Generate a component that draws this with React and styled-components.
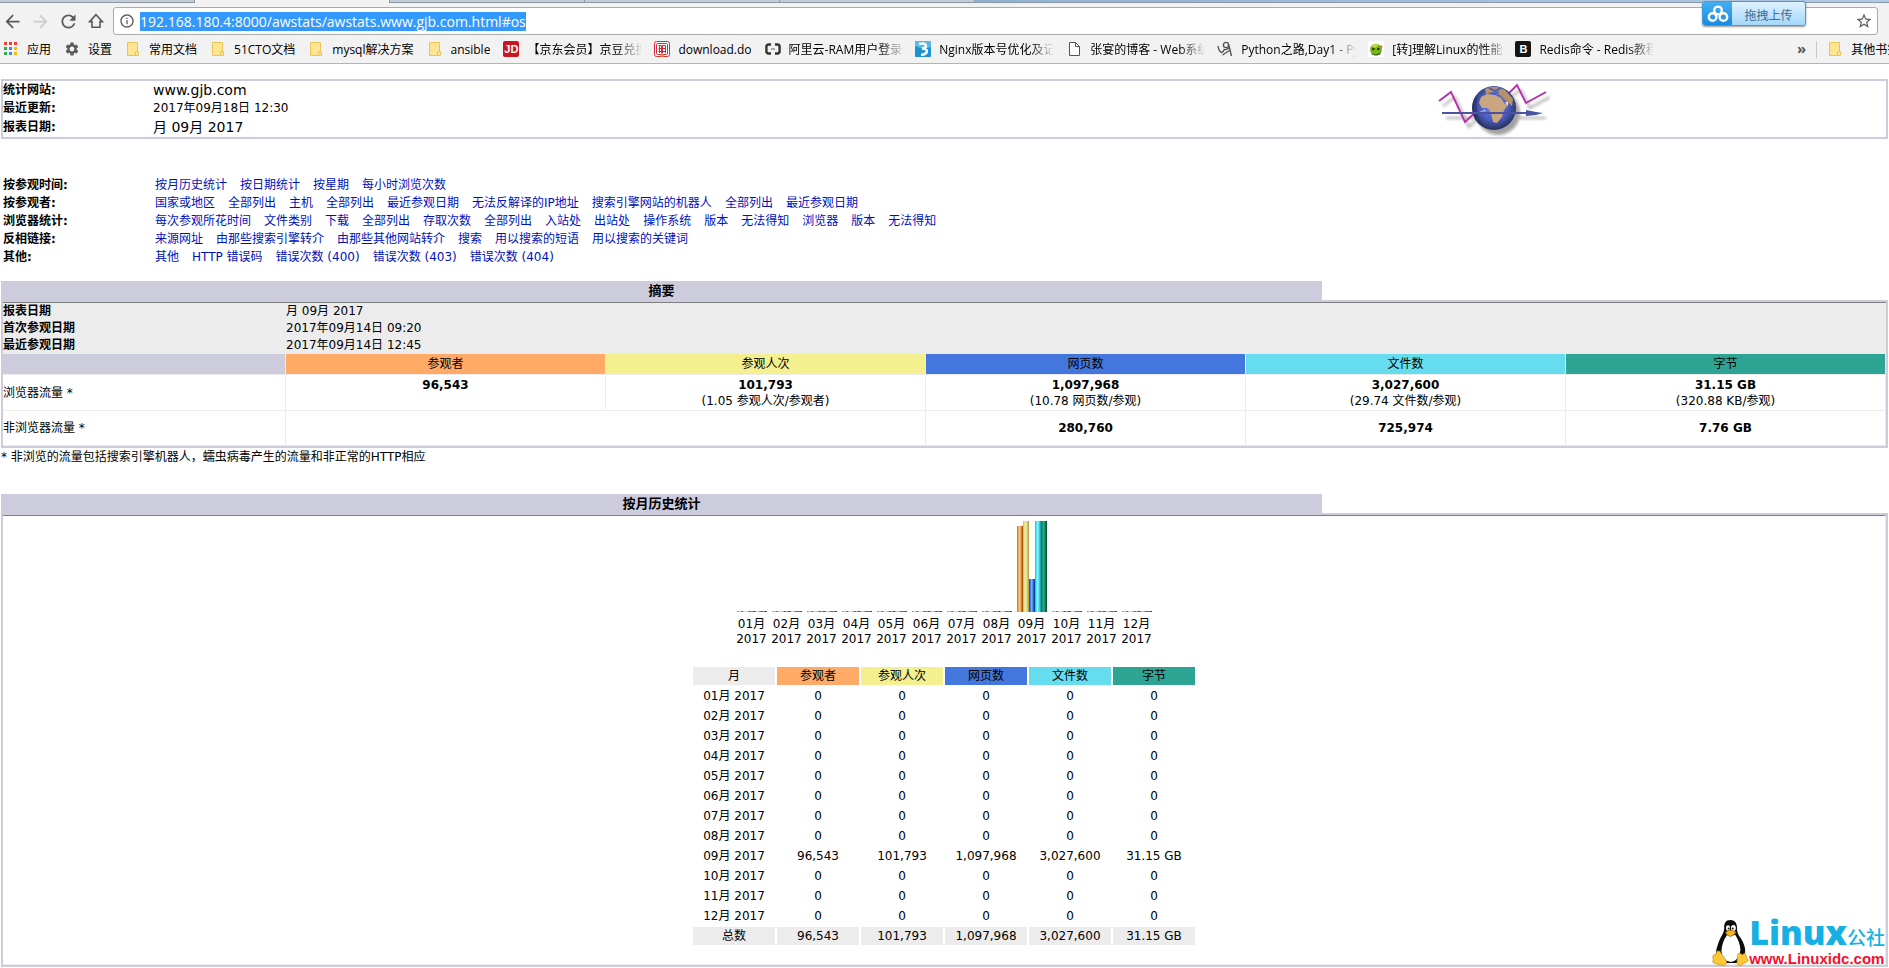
import React, { useEffect, useRef } from 'react';
import styled, { createGlobalStyle } from 'styled-components';
import {
  MdArrowBack,
  MdArrowForward,
  MdRefresh,
  MdInfoOutline,
  MdSettings,
  MdStarBorder,
} from 'react-icons/md';

const colors = {
  visitors: '#ffaa66',
  visits: '#f4f090',
  pages: '#4477dd',
  hits: '#66ddee',
  bytes: '#2ea495',
};

const barStripes = {
  visitors: ['#d08030', '#f0a860', '#f8c484', '#e8b068', '#c08030', '#a45c08'],
  visits: ['#d0c468', '#e8e090', '#f0eaa0', '#e4dc90', '#d0c468', '#b8aa48'],
  pages: ['#1c54c4', '#4480e8', '#84a8f8', '#5c8ce8', '#2c60cc', '#0c3c9c'],
  hits: ['#30c8d8', '#58e4f0', '#88f4fc', '#60e4f0', '#38ccd8', '#18a4b0'],
  bytes: ['#0c7c5c', '#24946c', '#30a490', '#1c9478', '#087858', '#00583c'],
};

const headings = [
  { key: 'visitors', label: '参观者' },
  { key: 'visits', label: '参观人次' },
  { key: 'pages', label: '网页数' },
  { key: 'hits', label: '文件数' },
  { key: 'bytes', label: '字节' },
];

const menu = [
  { title: '按参观时间:', links: ['按月历史统计', '按日期统计', '按星期', '每小时浏览次数'] },
  {
    title: '按参观者:',
    links: [
      '国家或地区',
      '全部列出',
      '主机',
      '全部列出',
      '最近参观日期',
      '无法反解译的IP地址',
      '搜索引擎网站的机器人',
      '全部列出',
      '最近参观日期',
    ],
  },
  {
    title: '浏览器统计:',
    links: [
      '每次参观所花时间',
      '文件类别',
      '下载',
      '全部列出',
      '存取次数',
      '全部列出',
      '入站处',
      '出站处',
      '操作系统',
      '版本',
      '无法得知',
      '浏览器',
      '版本',
      '无法得知',
    ],
  },
  {
    title: '反相链接:',
    links: ['来源网址', '由那些搜索引擎转介', '由那些其他网站转介', '搜索', '用以搜索的短语', '用以搜索的关键词'],
  },
  { title: '其他:', links: ['其他', 'HTTP 错误码', '错误次数 (400)', '错误次数 (403)', '错误次数 (404)'] },
];

const empty = ['0', '0', '0', '0', '0'];
const total = ['96,543', '101,793', '1,097,968', '3,027,600', '31.15 GB'];
const months = Array.from({ length: 12 }, (_, i) => {
  const active = i === 8;
  return {
    name: `${String(i + 1).padStart(2, '0')}月`,
    values: active ? total : empty,
    bars: active ? [86, 91, 33, 91, 91] : [1, 1, 1, 1, 1],
  };
});

function HomeIcon() {
  return (
    <svg width='16' height='16' viewBox='0 0 16 16' fill='none' stroke='#5a5a5a' strokeWidth='1.6'>
      <path d='M8 1.6 1.6 8.6H4V14.2H12V8.6H14.4Z' />
    </svg>
  );
}

function AppsIcon() {
  const dots = ['#ea4335', '#ea4335', '#ea4335', '#34a853', '#4285f4', '#fbbc05', '#34a853', '#4285f4', '#fbbc05'];
  return (
    <svg width='16' height='16' viewBox='0 0 16 16'>
      {dots.map((fill, i) => (
        <rect key={i} x={1 + (i % 3) * 5} y={1 + Math.floor(i / 3) * 5} width='3' height='3' fill={fill} />
      ))}
    </svg>
  );
}

function FolderIcon() {
  return (
    <svg width='16' height='16' viewBox='0 0 16 16'>
      <path d='M2.5 1.5H12.5V10.5H13.5V14.5H2.5Z' fill='#ffe592' stroke='#e8c558' />
      <path d='M12.5 10.5H10.5V14.5' fill='none' stroke='#e8c558' />
    </svg>
  );
}

function PageIcon() {
  return (
    <svg width='16' height='16' viewBox='0 0 16 16' fill='#fff' stroke='#555'>
      <path d='M3.5 1.5H9.5L13.5 5.5V14.5H3.5Z' />
      <path d='M9.5 1.5V5.5H13.5' fill='none' />
    </svg>
  );
}

function SealIcon() {
  return (
    <svg width='16' height='16' viewBox='0 0 16 16' fill='none' stroke='#d32a3c'>
      <rect x='0.5' y='0.5' width='15' height='15' rx='2' fill='#fff' />
      <rect x='2.5' y='2.5' width='11' height='11' rx='1' />
      <path d='M4.5 4.5H7.5V12.5M8.5 12.5V4.5H11.5V12M4.5 7.5H11.5M4.5 10.5H11.5M5.5 4.5V12' />
      <path d='M6 14.5H10' stroke='#f0a020' strokeWidth='2' />
    </svg>
  );
}

function AliIcon() {
  return (
    <svg width='16' height='16' viewBox='0 0 16 16' fill='none' stroke='#333' strokeWidth='2.4'>
      <path d='M6 3.5H3.6Q1.4 3.5 1.4 5.7V10.3Q1.4 12.5 3.6 12.5H6M10 3.5H12.4Q14.6 3.5 14.6 5.7V10.3Q14.6 12.5 12.4 12.5H10' />
      <path d='M6 8H10' stroke='#888' strokeWidth='1.4' />
    </svg>
  );
}

function BlueIcon() {
  return (
    <svg width='16' height='16' viewBox='0 0 16 16'>
      <rect width='16' height='16' rx='1' fill='#1c93d1' />
      <path d='M0 0H16V6Q8 9 0 5Z' fill='#57b9e4' />
      <path d='M4 3Q11 1.5 11 5Q11 7 7 7.5Q12.5 8 12 10.5Q11 13.5 6 14' fill='none' stroke='#fff' strokeWidth='2.4' />
    </svg>
  );
}

function ScribbleIcon() {
  return (
    <svg width='16' height='16' viewBox='0 0 16 16' fill='none' stroke='#555' strokeWidth='1.4'>
      <path d='M1 5Q1.5 10 4.5 11.5Q6.5 11 7.5 8' />
      <circle cx='9' cy='4' r='2.6' />
      <path d='M11.6 3.5Q13 8 14.4 15M7 8.5Q10 9 12 7M5.5 14 12.5 9.5' />
    </svg>
  );
}

function FrogIcon() {
  return (
    <svg width='16' height='16' viewBox='0 0 16 16'>
      <rect width='16' height='16' fill='#fff' />
      <ellipse cx='8' cy='8.5' rx='6' ry='5.8' fill='#79b51c' />
      <path d='M3 5Q7 1 11 4L7 7Z' fill='#b6dc46' />
      <path d='M3 12Q8 15 13 11L12 13.5Q8 15.5 4 13.6Z' fill='#38600c' />
      <circle cx='5.4' cy='8' r='1.3' fill='#253a06' />
      <circle cx='10.4' cy='8' r='1.3' fill='#253a06' />
      <circle cx='13.4' cy='5.6' r='1' fill='#cc5a20' />
    </svg>
  );
}

function GlobeLogo() {
  return (
    <svg width='112' height='56' viewBox='0 -1 112 56' role='img' aria-label='AWStats'>
      <defs>
        <radialGradient id='sea' cx='0.5' cy='0.45' r='0.55'>
          <stop offset='0' stopColor='#7a8ae8' />
          <stop offset='0.6' stopColor='#4a5cc0' />
          <stop offset='1' stopColor='#26305c' />
        </radialGradient>
        <filter id='soft' x='-20%' y='-20%' width='140%' height='140%'>
          <feGaussianBlur stdDeviation='1.4' />
        </filter>
        <clipPath id='disc'>
          <circle cx='56' cy='26' r='22' />
        </clipPath>
      </defs>
      <g filter='url(#soft)' opacity='0.55' transform='translate(4 5)'>
        <circle cx='56' cy='26' r='22' fill='#555' />
        <path d='M1 19 13 10 27 40 39 29M70 9 79 3 88 21 108 10M4 31H104' fill='none' stroke='#666' strokeWidth='2' />
      </g>
      <path d='M1 19 13 10 27 40 40 28M66 16 79 3 88 21 108 10' fill='none' stroke='#b82cac' strokeWidth='1.8' />
      <circle cx='56' cy='26' r='22' fill='url(#sea)' />
      <g clipPath='url(#disc)'>
        <path
          d='M43 15 49 12 57 13 63 16 66 21 70 23 66 28 64 35 59 41 55 40 53 31 50 26 44 26 41 21Z'
          fill='#c9a680'
        />
        <path d='M47 7Q57 2 67 8L75 17 74 24 67 18 62 13 55 10 48 12Z' fill='#b6926a' />
        <path d='M51 6 57 9 63 6M55 12 61 10' fill='none' stroke='#4658b8' strokeWidth='1.6' />
        <path d='M41 30 47 27 49 32Z' fill='#aab4ee' opacity='0.7' />
        <path d='M67 20 70 20 70 24Z' fill='#e8e8f4' />
        <path d='M34 8Q40 10 39 25T52 48H34Z' fill='#1c2448' opacity='0.35' />
      </g>
      <path d='M4 31H92' stroke='#4a52a4' strokeWidth='2.2' />
      <path d='M88 28 98 30 105 31 98 33 88 34Z' fill='#4a52a4' />
    </svg>
  );
}

function CloudIcon() {
  return (
    <svg width='22' height='18' viewBox='0 0 22 18' fill='none' stroke='#fff' strokeWidth='2.4'>
      <circle cx='11' cy='5.4' r='3.8' />
      <circle cx='5.6' cy='12' r='3.8' />
      <circle cx='16.4' cy='12' r='3.8' />
    </svg>
  );
}

function Penguin() {
  return (
    <svg width='37' height='46' viewBox='0 0 37 46'>
      <path
        d='M18.5 0C13.5 0 12 3.4 12.2 8C12.4 13 8.4 16.6 6.4 23C4.8 28 3.4 31 4.4 35L9 43H28L33 34C34 28 31.6 22.6 28.6 18C25.6 14 25 12 25 7.6C25 3 22.6 0 18.5 0Z'
        fill='#0c0c0c'
      />
      <path d='M15 15Q19 18 23 14.6Q28 22 28.4 30Q28 40 19 42Q10 41 9.4 31Q10 22 15 15Z' fill='#fff' />
      <ellipse cx='16' cy='8' rx='2' ry='2.8' fill='#fff' />
      <ellipse cx='21.4' cy='8' rx='2.4' ry='3' fill='#fff' />
      <circle cx='16.6' cy='8.6' r='1' fill='#111' />
      <circle cx='20.8' cy='8.6' r='1' fill='#111' />
      <path d='M13.6 12.4Q18 8.4 24 12Q21 16.4 18 16.4Q14.8 15.6 13.6 12.4Z' fill='#f4b41c' stroke='#a87408' strokeWidth='0.5' />
      <path
        d='M5 31Q8 30 9.6 34L14.6 41Q14.6 46 9.6 45.4L1.6 43Q0 42 1.2 39.6L0.8 36Q1 34.4 4 34.2Z'
        fill='#fcc838'
        stroke='#b88410'
        strokeWidth='0.6'
      />
      <path
        d='M25.6 35Q26 32.4 28 33.4Q31 35.6 33 33Q34.6 36 34.6 38L36.4 40Q36.6 41 34 42.2L28.6 45.4Q25 46 25 42Z'
        fill='#fcc838'
        stroke='#b88410'
        strokeWidth='0.6'
      />
    </svg>
  );
}

const bookmarks = [
  { icon: <AppsIcon />, text: '应用' },
  { icon: <MdSettings size={16} color='#5a5a5a' />, text: '设置' },
  { icon: <FolderIcon />, text: '常用文档' },
  { icon: <FolderIcon />, text: '51CTO文档' },
  { icon: <FolderIcon />, text: 'mysql解决方案' },
  { icon: <FolderIcon />, text: 'ansible' },
  { badge: 'JD', color: '#c81623', text: '【京东会员】京豆兑换', fade: true },
  { icon: <SealIcon />, text: 'download.do' },
  { icon: <AliIcon />, text: '阿里云-RAM用户登录', fade: true },
  { icon: <BlueIcon />, text: 'Nginx版本号优化及记录', fade: true },
  { icon: <PageIcon />, text: '张宴的博客 - Web系统', fade: true },
  { icon: <ScribbleIcon />, text: 'Python之路,Day1 - Py', fade: true },
  { icon: <FrogIcon />, text: '[转]理解Linux的性能', fade: true },
  { badge: 'B', color: '#151515', text: 'Redis命令 - Redis教程', fade: true },
];

function Browser() {
  const url = useRef(null);

  useEffect(() => {
    url.current.focus();
    url.current.select();
  }, []);

  return (
    <header>
      <TabStrip>
        <Tab />
        <Tab $active />
        <Tab />
        <Tab />
        <Tab />
      </TabStrip>
      <Toolbar>
        <ToolButton aria-label='后退'>
          <MdArrowBack size={21} />
        </ToolButton>
        <ToolButton aria-label='前进' disabled>
          <MdArrowForward size={21} />
        </ToolButton>
        <ToolButton aria-label='刷新'>
          <MdRefresh size={21} />
        </ToolButton>
        <ToolButton aria-label='主页'>
          <HomeIcon />
        </ToolButton>
        <AddressBar>
          <MdInfoOutline size={16} color='#5a5a5a' />
          <UrlInput
            ref={url}
            type='text'
            aria-label='地址'
            spellCheck={false}
            defaultValue='192.168.180.4:8000/awstats/awstats.www.gjb.com.html#os'
          />
          <ToolButton aria-label='收藏'>
            <MdStarBorder size={18} />
          </ToolButton>
        </AddressBar>
      </Toolbar>
      <Bookmarks>
        {bookmarks.map((item) => (
          <Bookmark key={item.text} href='#os'>
            {item.badge ? <Badge $color={item.color}>{item.badge}</Badge> : item.icon}
            <BookmarkText $fade={item.fade}>{item.text}</BookmarkText>
          </Bookmark>
        ))}
        <More>
          <MoreButton aria-label='更多书签'>»</MoreButton>
          <OtherBookmarks href='#os'>
            <FolderIcon />
            <BookmarkText>其他书签</BookmarkText>
          </OtherBookmarks>
        </More>
      </Bookmarks>
      <Upload>
        <UploadIcon>
          <CloudIcon />
        </UploadIcon>
        <UploadText>拖拽上传</UploadText>
      </Upload>
    </header>
  );
}

function Summary() {
  return (
    <Section>
      <SectionTitle>摘要</SectionTitle>
      <Frame>
        <SummaryTable>
          <colgroup>
            <col className='label' />
            {headings.map((h) => (
              <col key={h.key} />
            ))}
          </colgroup>
          <tbody>
            <InfoRow>
              <th scope='row'>报表日期</th>
              <td colSpan={5}>月 09月 2017</td>
            </InfoRow>
            <InfoRow>
              <th scope='row'>首次参观日期</th>
              <td colSpan={5}>2017年09月14日 09:20</td>
            </InfoRow>
            <InfoRow>
              <th scope='row'>最近参观日期</th>
              <td colSpan={5}>2017年09月14日 12:45</td>
            </InfoRow>
            <HeadRow>
              <HeadCell $bg='#ccccdd' />
              {headings.map((h) => (
                <HeadCell key={h.key} $bg={colors[h.key]}>
                  {h.label}
                </HeadCell>
              ))}
            </HeadRow>
            <TrafficRow>
              <th scope='row'>浏览器流量 *</th>
              <td>
                <b>96,543</b>
                <br />
                &nbsp;
              </td>
              <td>
                <b>101,793</b>
                <br />
                (1.05 参观人次/参观者)
              </td>
              <td>
                <b>1,097,968</b>
                <br />
                (10.78 网页数/参观)
              </td>
              <td>
                <b>3,027,600</b>
                <br />
                (29.74 文件数/参观)
              </td>
              <td>
                <b>31.15 GB</b>
                <br />
                (320.88 KB/参观)
              </td>
            </TrafficRow>
            <TrafficRow>
              <th scope='row'>非浏览器流量 *</th>
              <td colSpan={2} />
              <td>
                <b>280,760</b>
              </td>
              <td>
                <b>725,974</b>
              </td>
              <td>
                <b>7.76 GB</b>
              </td>
            </TrafficRow>
          </tbody>
        </SummaryTable>
      </Frame>
      <Footnote>* 非浏览的流量包括搜索引擎机器人，蠕虫病毒产生的流量和非正常的HTTP相应</Footnote>
    </Section>
  );
}

function History() {
  return (
    <Section>
      <SectionTitle>按月历史统计</SectionTitle>
      <Frame>
        <HistoryBody>
          <Chart>
            {months.map((m) => (
              <Month key={m.name}>
                <Bars>
                  {m.bars.map((height, i) => (
                    <Bar key={headings[i].key} $kind={headings[i].key} style={{ height }} />
                  ))}
                </Bars>
                <MonthLabel>
                  {m.name}
                  <br />
                  2017
                </MonthLabel>
              </Month>
            ))}
          </Chart>
          <MonthTable>
            <thead>
              <tr>
                <MonthCell as='th' $bg='#ececec'>
                  月
                </MonthCell>
                {headings.map((h) => (
                  <MonthCell as='th' key={h.key} $bg={colors[h.key]}>
                    {h.label}
                  </MonthCell>
                ))}
              </tr>
            </thead>
            <tbody>
              {months.map((m) => (
                <tr key={m.name}>
                  <MonthCell>{m.name} 2017</MonthCell>
                  {m.values.map((value, i) => (
                    <MonthCell key={headings[i].key}>{value}</MonthCell>
                  ))}
                </tr>
              ))}
            </tbody>
            <tfoot>
              <tr>
                <MonthCell $bg='#ececec'>总数</MonthCell>
                {total.map((value) => (
                  <MonthCell key={value} $bg='#ececec'>
                    {value}
                  </MonthCell>
                ))}
              </tr>
            </tfoot>
          </MonthTable>
        </HistoryBody>
      </Frame>
    </Section>
  );
}

function App() {
  return (
    <>
      <GlobalStyle />
      <Page>
        <Browser />
        <Report>
          <SiteInfo>
            <SiteGrid>
              <dt>统计网站:</dt>
              <SiteValue $large>www.gjb.com</SiteValue>
              <dt>最近更新:</dt>
              <SiteValue>2017年09月18日 12:30</SiteValue>
              <dt>报表日期:</dt>
              <SiteValue $large>月 09月 2017</SiteValue>
            </SiteGrid>
            <GlobeLogo />
          </SiteInfo>
          <Menu>
            {menu.map((row) => (
              <MenuRow key={row.title}>
                <MenuTitle>{row.title}</MenuTitle>
                {row.links.map((link, i) => (
                  <MenuLink key={i} href='#os'>
                    {link}
                  </MenuLink>
                ))}
              </MenuRow>
            ))}
          </Menu>
          <Summary />
          <History />
        </Report>
        <Watermark>
          <Penguin />
          <div>
            <Brand>
              Linux<small>公社</small>
            </Brand>
            <BrandUrl>www.Linuxidc.com</BrandUrl>
          </div>
        </Watermark>
      </Page>
    </>
  );
}

export default App;

const GlobalStyle = createGlobalStyle`
  body {
    margin: 0;
    background: #fff;
    color: #000;
    font: 12px/17px 'DejaVu Sans', 'Noto Sans CJK SC', sans-serif;
  }
  * {
    box-sizing: border-box;
  }
`;

const Page = styled.div`
  position: relative;
  overflow: hidden;
`;

const TabStrip = styled.div`
  display: flex;
  height: 3px;
  background: linear-gradient(90deg, #b4d8f8, #a8ccec 30%, #90b0d0 50%, #b0cce4);
  border-bottom: 1px solid #8a98a8;
`;

const Tab = styled.div`
  width: 195px;
  height: ${(props) => (props.$active ? '3px' : '2px')};
  background: ${(props) => (props.$active ? '#f2f2f2' : '#c6ccd4')};
  border-right: 1px solid #949ca4;
`;

const Toolbar = styled.div`
  display: flex;
  align-items: center;
  gap: 6px;
  padding: 4px 11px 0 1px;
  background: #f2f2f2;
`;

const ToolButton = styled.button`
  display: flex;
  align-items: center;
  justify-content: center;
  width: 22px;
  height: 22px;
  padding: 0;
  border: 0;
  background: none;
  color: #5a5a5a;
  &:disabled {
    color: #ccc;
  }
`;

const AddressBar = styled.div`
  flex: 1;
  display: flex;
  align-items: center;
  gap: 5px;
  height: 28px;
  padding: 0 2px 0 5px;
  border: 1px solid #aaa;
  border-radius: 3px;
  background: #fff;
`;

const UrlInput = styled.input`
  flex: 1;
  padding: 0;
  border: 0;
  outline: 0;
  background: none;
  font: 14px 'Open Sans', sans-serif;
  &::selection {
    background: #3399ff;
    color: #fff;
  }
`;

const Bookmarks = styled.nav`
  display: flex;
  align-items: center;
  gap: 13px;
  height: 29px;
  padding-left: 3px;
  border-bottom: 1px solid #b4b4b4;
  background: #f2f2f2;
  font-family: 'Open Sans', 'Noto Sans CJK SC', sans-serif;
  overflow: hidden;
`;

const Bookmark = styled.a`
  display: flex;
  flex: none;
  align-items: center;
  gap: 8px;
  color: #000;
  text-decoration: none;
`;

const BookmarkText = styled.span`
  max-width: 114px;
  overflow: hidden;
  white-space: nowrap;
  mask-image: ${(props) => (props.$fade ? 'linear-gradient(90deg, #000 90px, transparent 116px)' : 'none')};
`;

const Badge = styled.span`
  width: 16px;
  height: 16px;
  border-radius: 2px;
  background: ${(props) => props.$color};
  color: #fff;
  font: bold 11px/16px 'Liberation Sans', sans-serif;
  text-align: center;
`;

const More = styled.div`
  display: flex;
  flex: none;
  align-items: center;
  width: 92px;
  margin-left: auto;
`;

const MoreButton = styled.button`
  padding: 0 10px 2px 0;
  border: 0;
  background: none;
  color: #555;
  font: bold 15px 'Open Sans', sans-serif;
`;

const OtherBookmarks = styled(Bookmark)`
  padding-left: 10px;
  border-left: 1px solid #c8c8c8;
`;

const Upload = styled.button`
  position: absolute;
  top: 1px;
  right: 83px;
  display: flex;
  height: 25px;
  padding: 0;
  border: 1px solid #3c9cdc;
  border-radius: 3px;
  background: linear-gradient(#e0f2fe, #a4d8fa);
  box-shadow: 0 1px 2px rgba(0, 0, 0, 0.4);
  overflow: hidden;
`;

const UploadIcon = styled.span`
  display: flex;
  align-items: center;
  justify-content: center;
  width: 29px;
  height: 100%;
  background: linear-gradient(#44aef4, #1a8ce4);
`;

const UploadText = styled.span`
  width: 73px;
  color: #3a6c94;
  font: 12px/25px 'Noto Sans CJK SC', sans-serif;
`;

const Report = styled.main`
  padding: 15px 1px 1px;
`;

const SiteInfo = styled.section`
  display: flex;
  justify-content: space-between;
  padding-right: 336px;
  border: 2px solid #ccccdd;
`;

const SiteGrid = styled.dl`
  display: grid;
  grid-template-columns: 150px auto;
  grid-template-rows: 19px 17px 20px;
  align-items: center;
  margin: 0;
  dt {
    font-weight: bold;
  }
`;

const SiteValue = styled.dd`
  margin: 0;
  font-size: ${(props) => (props.$large ? '14px' : '12px')};
`;

const Menu = styled.nav`
  margin: 37px 2px 15px;
`;

const MenuRow = styled.div`
  display: flex;
  gap: 13px;
  line-height: 18px;
`;

const MenuTitle = styled.b`
  width: 139px;
`;

const MenuLink = styled.a`
  color: #0011bb;
  text-decoration: none;
`;

const Section = styled.section`
  & + & {
    margin-top: 28px;
  }
`;

const SectionTitle = styled.h2`
  width: 70%;
  margin: 0;
  background: #ccccdd;
  font-size: 13px;
  line-height: 19px;
  text-align: center;
`;

const Frame = styled.div`
  border: 2px solid #ccccdd;
`;

const SummaryTable = styled.table`
  width: 100%;
  border-top: 1px solid #808080;
  border-spacing: 0;
  table-layout: fixed;
  .label {
    width: 283px;
  }
  th,
  td {
    padding: 0;
  }
`;

const InfoRow = styled.tr`
  height: 17px;
  background: #ececec;
  text-align: left;
`;

const HeadRow = styled.tr`
  height: 21px;
`;

const HeadCell = styled.th`
  border-right: 1px solid #ececec;
  border-bottom: 1px solid #ececec;
  background: ${(props) => props.$bg};
  font-weight: normal;
`;

const TrafficRow = styled.tr`
  height: 36px;
  line-height: 16px;
  text-align: center;
  th {
    font-weight: normal;
    text-align: left;
  }
  th,
  td {
    border-right: 1px solid #ececec;
    border-bottom: 1px solid #ececec;
  }
  &:last-child {
    height: 35px;
  }
`;

const Footnote = styled.p`
  margin: 0;
  line-height: 18px;
`;

const HistoryBody = styled.div`
  display: flex;
  flex-direction: column;
  align-items: center;
  gap: 18px;
  padding: 5px 0 17px;
  border-top: 1px solid #808080;
  border-right: 1px solid #ececec;
  border-bottom: 1px solid #ececec;
`;

const Chart = styled.div`
  display: flex;
`;

const Month = styled.div`
  width: 35px;
`;

const Bars = styled.div`
  display: flex;
  align-items: flex-end;
  justify-content: center;
  height: 91px;
`;

const Bar = styled.div`
  width: 6px;
  background: linear-gradient(
    90deg,
    ${(props) => barStripes[props.$kind].map((c, i) => `${c} ${i}px ${i + 1}px`).join(', ')}
  );
`;

const MonthLabel = styled.div`
  margin-top: 5px;
  line-height: 15px;
  text-align: center;
`;

const MonthTable = styled.table`
  border-spacing: 2px;
`;

const MonthCell = styled.td`
  width: 82px;
  height: 18px;
  padding: 0;
  background: ${(props) => props.$bg || 'none'};
  font-weight: normal;
  text-align: center;
`;

const Watermark = styled.aside`
  position: absolute;
  right: 4px;
  bottom: 2px;
  display: flex;
  align-items: flex-end;
  font-family: 'Liberation Sans', 'Noto Sans CJK SC', sans-serif;
`;

const Brand = styled.div`
  color: #16b0e4;
  font: 800 34px/26px 'Open Sans', 'Noto Sans CJK SC', sans-serif;
  small {
    font-weight: 500;
    font-size: 19px;
  }
`;

const BrandUrl = styled.div`
  color: #f4102c;
  font-weight: bold;
  font-size: 15px;
  line-height: 15px;
`;
